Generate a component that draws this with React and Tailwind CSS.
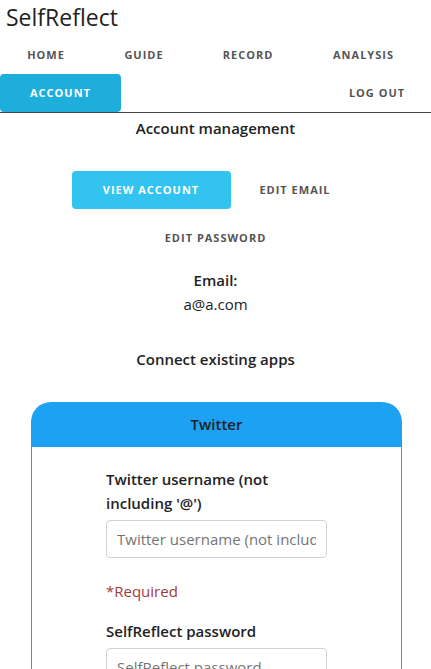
import { useState } from "react";

const font = { fontFamily: '"Open Sans", "Liberation Sans", sans-serif' };

function NavButton({ label, active, className = "" }) {
  return (
    <button
      type="button"
      className={
        "h-[38px] flex items-center justify-center text-[11px] font-bold uppercase tracking-[1px] rounded-[4px] " +
        (active ? "bg-[#1eaedb] text-white " : "text-[#555] ") +
        className
      }
    >
      {label}
    </button>
  );
}

function App() {
  const [username, setUsername] = useState("");
  const [password, setPassword] = useState("");

  return (
    <div className="min-h-screen bg-white text-[#222] text-[15px]" style={font}>
      {/* header */}
      <div className="h-[36px] pl-[6px] text-[23px] leading-[34px] text-[#222]">SelfReflect</div>

      <nav className="border-b border-[#444]">
        <div className="flex h-[38px]">
          <NavButton label="Home" className="w-[92px]" />
          <NavButton label="Guide" className="w-[94px] ml-[5px]" />
          <NavButton label="Record" className="w-[106px] ml-[4px]" />
          <NavButton label="Analysis" className="w-[115px] ml-[5px]" />
        </div>
        <div className="flex h-[38px] justify-between">
          <NavButton label="Account" active className="w-[121px] h-[37px]" />
          <NavButton label="Log out" className="w-[100px] mr-[4px]" />
        </div>
      </nav>

      {/* account management */}
      <div className="text-center">
        <div className="mt-[3px] leading-[24px] font-semibold">Account management</div>

        <div className="mt-[31px] flex justify-center">
          <NavButton label="View account" active className="w-[159px] bg-[#33c3f0]" />
          <NavButton label="Edit email" className="w-[129px]" />
        </div>
        <div className="mt-[10px] flex justify-center">
          <NavButton label="Edit password" className="w-[160px]" />
        </div>

        <div className="mt-[11px] leading-[24px] font-semibold">Email:</div>
        <div className="leading-[24px]">a@a.com</div>

        <div className="mt-[31px] leading-[24px] font-semibold">Connect existing apps</div>
      </div>

      {/* twitter card */}
      <div className="mt-[31px] ml-[31px] w-[371px]">
        <div className="h-[45px] rounded-t-[20px] bg-[#1da1f2] flex items-center justify-center font-semibold text-[#222]">
          Twitter
        </div>
        <div className="border-x border-[#1da1f2] pt-[20px] pb-[30px]">
          <form className="w-[221px] mx-auto" onSubmit={(e) => e.preventDefault()}>
            <label className="block leading-[24px] font-semibold">
              Twitter username (not including '@')
            </label>
            <input
              type="text"
              value={username}
              onChange={(e) => setUsername(e.target.value)}
              placeholder="Twitter username (not including '@')"
              className="mt-[5px] w-full h-[38px] px-[10px] border border-[#d1d1d1] rounded-[4px] text-[15px] placeholder:text-[#757575] outline-none"
            />
            <div className="mt-[21px] leading-[24px] text-[#a33a3a]">*Required</div>

            <label className="mt-[16px] block leading-[24px] font-semibold">SelfReflect password</label>
            <input
              type="password"
              value={password}
              onChange={(e) => setPassword(e.target.value)}
              placeholder="SelfReflect password"
              className="mt-[5px] w-full h-[38px] px-[10px] border border-[#d1d1d1] rounded-[4px] text-[15px] placeholder:text-[#757575] outline-none"
            />
          </form>
        </div>
      </div>
    </div>
  );
}

export default App;
